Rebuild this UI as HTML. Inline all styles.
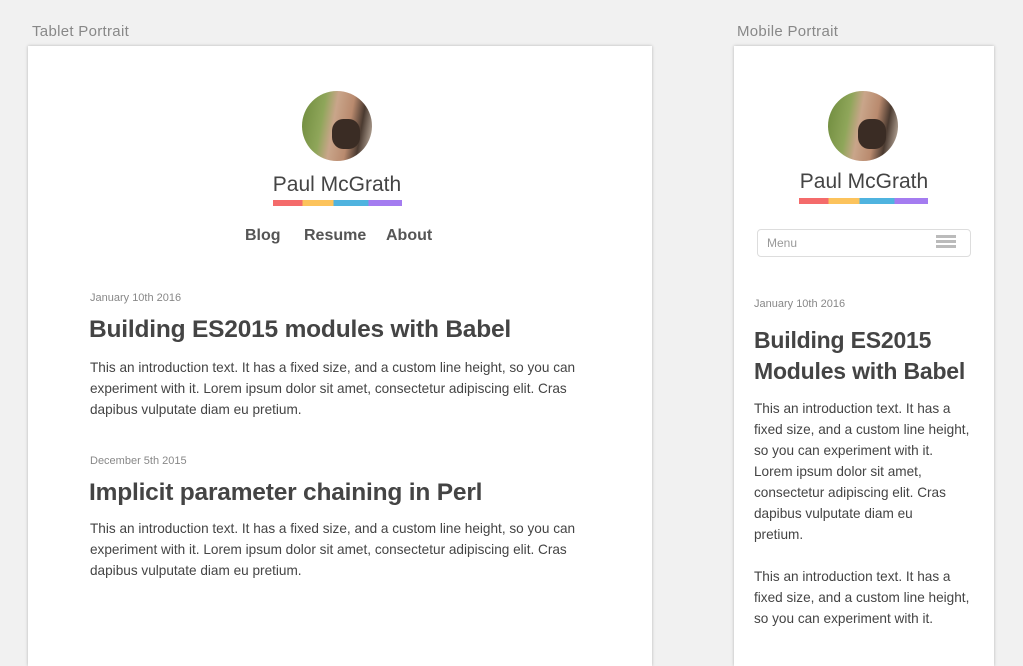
<!DOCTYPE html>
<html><head><meta charset="utf-8"><style>
body{margin:0;width:1023px;height:655px;background:#f1f1f1;font-family:"Liberation Sans",sans-serif;position:relative;overflow:hidden;color:#444}
.lbl{position:absolute;top:23px;font-size:15px;color:#888;letter-spacing:.3px}
.card{position:absolute;top:46px;height:620px;background:#fff;box-shadow:0 0 3px rgba(0,0,0,.25)}
.a{position:absolute;white-space:nowrap}
.av{position:absolute;width:70px;height:70px;border-radius:50%;overflow:hidden;background:linear-gradient(100deg,#6d8a3c 0%,#8fa65a 30%,#c9a58a 45%,#b98a6e 65%,#4a3a30 80%,#d8c8b8 100%)}
.av:after{content:"";position:absolute;left:30px;top:28px;width:28px;height:30px;border-radius:40%;background:#3a2c24}
.bar{position:absolute;height:6px;width:129px;background:linear-gradient(90deg,#f46b6b 0 23%,#fcc35c 23% 47%,#4fb3df 47% 74%,#a47cf0 74%)}
.name{font-size:21px;color:#444;text-align:center}
.nav{font-size:16px;font-weight:bold;color:#555}
.date{font-size:11px;color:#888}
.t{font-size:24.5px;font-weight:bold;color:#444;letter-spacing:-.2px}
.p{font-size:13.6px;color:#444;line-height:21px}
</style></head><body>
<div class="lbl" style="left:32px">Tablet Portrait</div>
<div class="lbl" style="left:737px">Mobile Portrait</div>
<div class="card" style="left:28px;width:624px"></div>
<div class="card" style="left:734px;width:260px"></div>

<div class="av" style="left:302px;top:91px"></div>
<div class="a name" style="left:237px;width:200px;top:173px">Paul McGrath</div>
<div class="bar" style="left:273px;top:200px"></div>
<div class="a nav" style="left:245px;top:227px">Blog</div>
<div class="a nav" style="left:304px;top:227px">Resume</div>
<div class="a nav" style="left:386px;top:227px">About</div>

<div class="a date" style="left:90px;top:292px">January 10th 2016</div>
<div class="a t" style="left:89px;top:316px">Building ES2015 modules with Babel</div>
<div class="a p" style="left:90px;top:357px">This an introduction text. It has a fixed size, and a custom line height, so you can<br>experiment with it. Lorem ipsum dolor sit amet, consectetur adipiscing elit. Cras<br>dapibus vulputate diam eu pretium.</div>
<div class="a date" style="left:90px;top:455px">December 5th 2015</div>
<div class="a t" style="left:89px;top:479px">Implicit parameter chaining in Perl</div>
<div class="a p" style="left:90px;top:518px">This an introduction text. It has a fixed size, and a custom line height, so you can<br>experiment with it. Lorem ipsum dolor sit amet, consectetur adipiscing elit. Cras<br>dapibus vulputate diam eu pretium.</div>

<div class="av" style="left:828px;top:91px"></div>
<div class="a name" style="left:764px;width:200px;top:170px">Paul McGrath</div>
<div class="bar" style="left:799px;top:198px"></div>
<div class="a" style="left:757px;top:229px;width:212px;height:26px;border:1px solid #ddd;border-radius:4px"></div>
<div class="a" style="left:767px;top:236px;font-size:12px;color:#999">Menu</div>
<div class="a" style="left:936px;top:235px;width:20px;height:3px;background:#bbb;box-shadow:0 5px 0 #bbb,0 10px 0 #bbb"></div>
<div class="a date" style="left:754px;top:298px">January 10th 2016</div>
<div class="a t" style="left:754px;top:325px;font-size:23px;line-height:31px">Building ES2015<br>Modules with Babel</div>
<div class="a p" style="left:754px;top:398px">This an introduction text. It has a<br>fixed size, and a custom line height,<br>so you can experiment with it.<br>Lorem ipsum dolor sit amet,<br>consectetur adipiscing elit. Cras<br>dapibus vulputate diam eu<br>pretium.<br><br>This an introduction text. It has a<br>fixed size, and a custom line height,<br>so you can experiment with it.</div>
</body></html>
